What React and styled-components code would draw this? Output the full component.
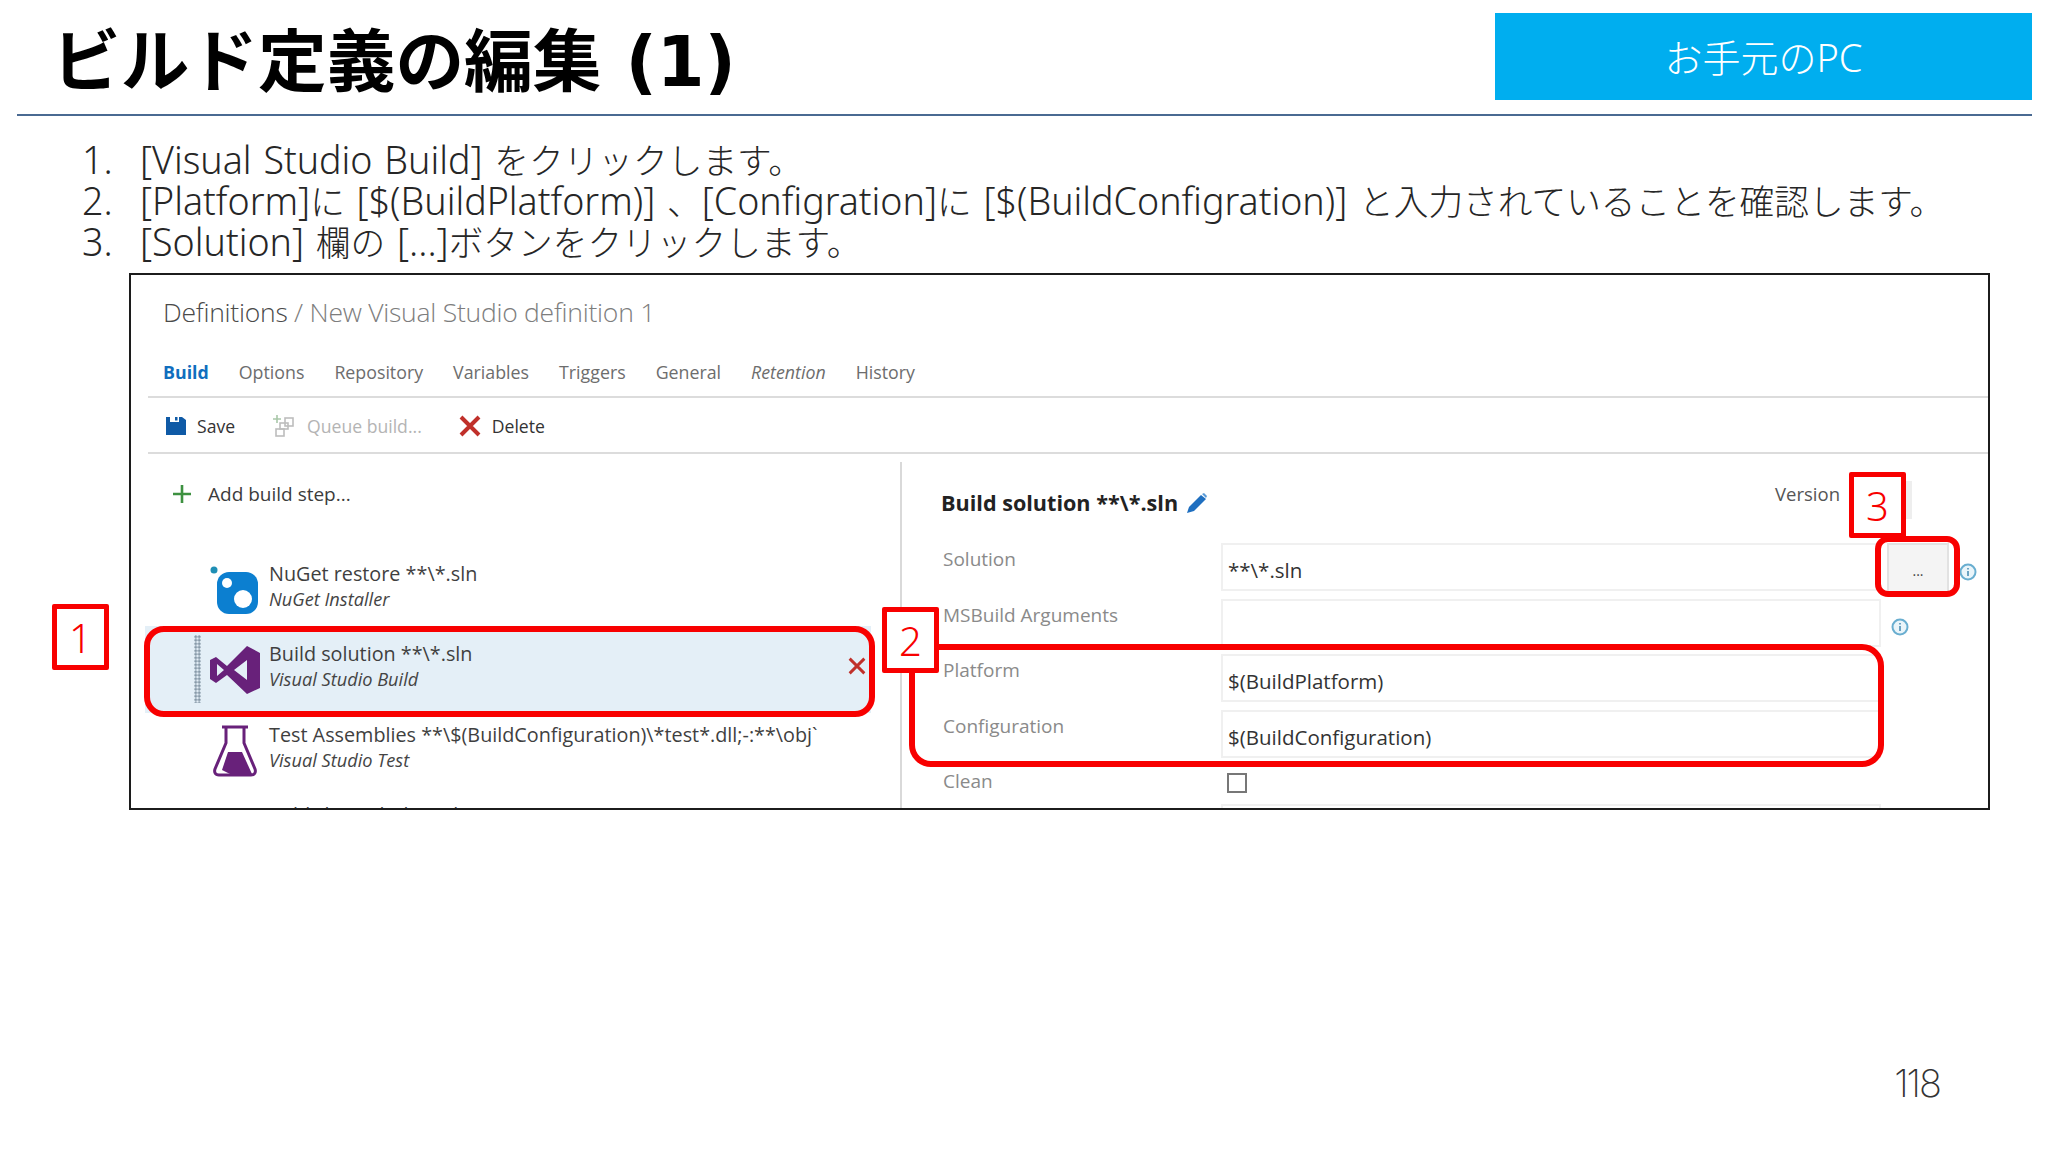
import styled, { createGlobalStyle } from 'styled-components';

const GlobalStyle = createGlobalStyle`
  html, body {
    margin: 0;
    background: #fff;
  }
  * {
    box-sizing: border-box;
  }
`;

const jpFont = `"Noto Sans", "Noto Sans CJK JP", sans-serif`;
const uiFont = `"Open Sans", "Noto Sans", sans-serif`;

const Page = styled.div`
  width: 2048px;
  height: 1152px;
  overflow: hidden;
  font-family: ${jpFont};
  background: #fff;
`;

const Header = styled.header`
  margin: 0 16px 0 17px;
  height: 116px;
  display: flex;
  justify-content: space-between;
  align-items: flex-start;
  border-bottom: 2px solid #4a6a92;
`;

const Title = styled.h1`
  margin: 24px 0 0 35px;
  font-size: 68.7px;
  line-height: 76px;
  font-weight: 700;
  color: #000;
  font-family: "DejaVu Sans", "Noto Sans CJK JP", sans-serif;
  white-space: nowrap;
`;

const DeviceBadge = styled.div`
  margin-top: 13px;
  width: 537px;
  height: 87px;
  padding-bottom: 2px;
  background: #00aeef;
  color: #fff;
  font-size: 38px;
  font-weight: 300;
  display: flex;
  align-items: center;
  justify-content: center;
`;

const Steps = styled.ol`
  margin: 23px 0 0 82px;
  padding: 0;
  list-style: none;
`;

const Step = styled.li`
  display: flex;
  height: 41px;
  align-items: center;
  font-size: 37.6px;
  font-weight: 300;
  word-spacing: 2px;
  color: #262626;
  white-space: nowrap;
`;

const StepNumber = styled.span`
  width: 58px;
`;

const Kana = styled.span`
  font-size: 34.7px;
`;

const Frame = styled.section`
  position: relative;
  margin: 11px 0 0 129px;
  width: 1861px;
  height: 537px;
  border: 2px solid #1c1c1c;
  overflow: hidden;
  font-family: ${uiFont};
  background: #fff;
`;

const Breadcrumb = styled.div`
  height: 74px;
  padding: 0 0 0 32px;
  display: flex;
  align-items: center;
  font-size: 26.5px;
  letter-spacing: -0.25px;
  font-weight: 300;
  color: #7d7d7d;
  span {
    color: #4a4a4a;
  }
`;

const Tabs = styled.nav`
  margin-left: 17px;
  height: 49px;
  padding: 0 0 2px 15px;
  display: flex;
  align-items: center;
  gap: 30px;
  border-bottom: 2px solid #dcdcdc;
  font-size: 17.8px;
  color: #6d6d6d;
`;

const Tab = styled.span`
  font-weight: ${p => (p.$active ? 700 : 400)};
  font-style: ${p => (p.$italic ? 'italic' : 'normal')};
  color: ${p => (p.$active ? '#106ebe' : 'inherit')};
`;

const Toolbar = styled.div`
  margin-left: 17px;
  height: 56px;
  padding: 2px 0 0 18px;
  display: flex;
  align-items: center;
  border-bottom: 2px solid #dcdcdc;
  font-size: 17.6px;
  color: #333;
`;

const ToolButton = styled.div`
  display: flex;
  align-items: center;
  gap: 11px;
  margin-right: 37px;
  color: ${p => (p.$disabled ? '#b4b4b4' : 'inherit')};
`;

const Body = styled.div`
  display: grid;
  grid-template-columns: 771px 1fr;
  height: 354px;
  padding-top: 8px;
`;

const LeftPane = styled.div`
  border-right: 2px solid #d9d9d9;
  overflow: hidden;
`;

const AddStep = styled.div`
  margin: 17px 0 37px 41px;
  height: 30px;
  display: flex;
  align-items: center;
  gap: 16px;
  font-size: 19px;
  color: #3c3c3c;
`;

const StepRow = styled.div`
  height: 80.3px;
  margin-left: 14px;
  width: 726px;
  padding-left: 51px;
  display: grid;
  grid-template-columns: 14px 50px 1fr;
  align-items: center;
  background: ${p => (p.$selected ? '#e4eff7' : 'transparent')};
  box-shadow: ${p => (p.$selected ? '0 6px 0 #e4eff7' : 'none')};
  position: relative;
`;

const DragHandle = styled.div`
  grid-column: 1;
  width: 7px;
  height: 68px;
  margin: 6px 0 0 -2px;
  background-image: radial-gradient(#8799a8 1.3px, transparent 1.5px);
  background-size: 3.5px 3.5px;
`;

const StepIcon = styled.div`
  grid-column: 2;
  height: 60px;
  padding-top: 8px;
  display: flex;
  align-items: center;
  justify-content: center;
`;

const StepText = styled.div`
  grid-column: 3;
  padding-left: 9px;
  white-space: nowrap;
`;

const StepName = styled.div`
  font-size: 19.8px;
  line-height: 27px;
  color: #3f3f3f;
`;

const StepKind = styled.div`
  font-size: 18.2px;
  line-height: 25px;
  font-style: italic;
  color: #444;
`;

const RemoveStep = styled.div`
  position: absolute;
  right: 5px;
  top: 31px;
  display: flex;
`;

const RightPane = styled.div`
  padding: 14px 0 0 39px;
  overflow: hidden;
  position: relative;
`;

const PaneHeader = styled.div`
  height: 67px;
  display: flex;
  align-items: flex-start;
  justify-content: space-between;
  padding-right: 76px;
`;

const PaneTitle = styled.h2`
  margin: 12px 0 0;
  font-size: 21.6px;
  line-height: 30px;
  font-weight: 700;
  color: #222;
  display: flex;
  align-items: center;
  gap: 8px;
`;

const VersionLabel = styled.div`
  margin-top: 5px;
  padding-right: 65px;
  font-size: 18.5px;
  line-height: 26px;
  color: #555;
  border-right: 7px solid #eeeeee;
  height: 38px;
`;

const Field = styled.div`
  display: grid;
  grid-template-columns: 280px 660px 68px 30px;
  height: ${p => p.$height || 55.6}px;
  align-items: start;
`;

const FieldLabel = styled.label`
  padding: 2px 0 0 2px;
  font-size: 19px;
  line-height: 28px;
  color: #8a8a8a;
`;

const FieldInput = styled.div`
  height: 48px;
  border: 2px solid #f0f0f0;
  padding: 11px 0 0 5px;
  font-size: 20.5px;
  line-height: 28px;
  color: #333;
`;

const CheckBox = styled.div`
  margin: 8px 0 0 6px;
  width: 20px;
  height: 20px;
  border: 2px solid #777;
`;

const BrowseButton = styled.div`
  margin-left: 6px;
  height: 48px;
  background: #f4f4f4;
  border: 2px solid #e2e2e2;
  border-bottom: none;
  display: flex;
  justify-content: center;
  padding-top: 16px;
  font-size: 14px;
  line-height: 20px;
  color: #444;
`;

const InfoSlot = styled.div`
  margin: ${p => p.$top}px 0 0 ${p => p.$left}px;
  display: flex;
`;

const Ring = styled.div`
  position: absolute;
  left: ${p => p.$x - 131}px;
  top: ${p => p.$y - 276}px;
  width: ${p => p.$w}px;
  height: ${p => p.$h}px;
  border: 6px solid #f80000;
  border-radius: ${p => p.$r}px;
  pointer-events: none;
`;

const Callout = styled.div`
  position: absolute;
  left: ${p => p.$x}px;
  top: ${p => p.$y}px;
  width: 57px;
  height: 66px;
  border: 5px solid #f80000;
  border-radius: 2px;
  background: #fff;
  color: #f80000;
  font-family: ${jpFont};
  font-size: 40px;
  font-weight: 300;
  display: flex;
  align-items: center;
  justify-content: center;
`;

const PageNumber = styled.div`
  margin: 250px 108px 0 0;
  text-align: right;
  font-family: Inter, sans-serif;
  font-size: 38px;
  line-height: 46px;
  font-weight: 200;
  letter-spacing: -2px;
  color: #333;
`;

const Layer = styled.div`
  position: relative;
`;

const SaveIcon = () => (
  <svg width="20" height="20" viewBox="0 0 20 20">
    <path d="M0 1h4v5h9V1h3l4 3v15H0z" fill="#0f5aa6" />
    <rect x="9" y="1" width="2.5" height="3.5" fill="#0f5aa6" />
  </svg>
);

const QueueIcon = () => (
  <svg width="24" height="24" viewBox="0 0 24 24" fill="none" stroke="#bdbdbd" strokeWidth="1.6">
    <rect x="13" y="4" width="8" height="8" />
    <rect x="8" y="9" width="8" height="6" />
    <rect x="4" y="15" width="8" height="7" />
    <path d="M5 1v8M1 5h8" stroke="#a9c7a9" />
  </svg>
);

const CrossIcon = ({ size = 22, width = 4 }) => (
  <svg width={size} height={size} viewBox="0 0 22 22">
    <path d="M2 2l18 18M20 2L2 20" stroke="#c0302a" strokeWidth={width} fill="none" />
  </svg>
);

const PlusIcon = () => (
  <svg width="20" height="20" viewBox="0 0 20 20">
    <path d="M10 1v18M1 10h18" stroke="#3d9140" strokeWidth="2.6" />
  </svg>
);

const NuGetIcon = () => (
  <svg width="50" height="50" viewBox="0 0 50 50">
    <circle cx="4" cy="5" r="3.5" fill="#1f8fb5" />
    <rect x="7" y="7" width="41" height="42" rx="12" fill="#0c7fd0" />
    <circle cx="17" cy="18" r="5" fill="#fff" />
    <circle cx="33" cy="34" r="9" fill="#fff" />
  </svg>
);

const VsIcon = () => (
  <svg width="50" height="50" viewBox="0 0 50 50">
    <path
      fillRule="evenodd"
      fill="#68217a"
      d="M37 1l13 7v35l-13 6L17 30l-11 8-6-4V15l6-3 11 9zM37 15L24 25l13 10zM7 19v12l7-6z"
    />
  </svg>
);

const FlaskIcon = () => (
  <svg width="44" height="52" viewBox="0 0 44 52">
    <path d="M9 2h26M13 3v15L2 44c-1 3 0 6 4 6h32c4 0 5-3 4-6L31 18V3" fill="none" stroke="#68217a" strokeWidth="3" />
    <path d="M15 27h14l10 22H17l-8-4z" fill="#68217a" />
  </svg>
);

const PencilIcon = () => (
  <svg width="22" height="22" viewBox="0 0 22 22">
    <path d="M1 21l2-6L15 3l5 4L8 19z" fill="#1f6fc0" />
    <path d="M16 2l2-1 3 3-1 2z" fill="#5a9bd8" />
  </svg>
);

const InfoIcon = () => (
  <svg width="18" height="18" viewBox="0 0 18 18">
    <circle cx="9" cy="9" r="7.5" fill="#eaf5fa" stroke="#69aed0" strokeWidth="2" />
    <path d="M9 8v5M9 5v1.6" stroke="#4d8fb5" strokeWidth="1.6" />
  </svg>
);

const App = () => (
  <Page>
    <GlobalStyle />
    <Header>
      <Title>ビルド定義の編集 (1)</Title>
      <DeviceBadge>お手元のPC</DeviceBadge>
    </Header>

    <Steps>
      <Step>
        <StepNumber>1.</StepNumber>
        <span>[Visual Studio Build] <Kana>をクリックします。</Kana></span>
      </Step>
      <Step>
        <StepNumber>2.</StepNumber>
        <span>[Platform]<Kana>に</Kana> [$(BuildPlatform)] <Kana>、</Kana>[Configration]<Kana>に</Kana> [$(BuildConfigration)] <Kana>と入力されていることを確認します。</Kana></span>
      </Step>
      <Step>
        <StepNumber>3.</StepNumber>
        <span>[Solution] <Kana>欄の</Kana> [...]<Kana>ボタンをクリックします。</Kana></span>
      </Step>
    </Steps>

    <Layer>
      <Frame>
        <Breadcrumb><span>Definitions</span>&nbsp;/ New Visual Studio definition 1</Breadcrumb>
        <Tabs>
          <Tab $active>Build</Tab>
          <Tab>Options</Tab>
          <Tab>Repository</Tab>
          <Tab>Variables</Tab>
          <Tab>Triggers</Tab>
          <Tab>General</Tab>
          <Tab $italic>Retention</Tab>
          <Tab>History</Tab>
        </Tabs>
        <Toolbar>
          <ToolButton><SaveIcon />Save</ToolButton>
          <ToolButton $disabled><QueueIcon />Queue build...</ToolButton>
          <ToolButton><CrossIcon />Delete</ToolButton>
        </Toolbar>
        <Body>
          <LeftPane>
            <AddStep><PlusIcon />Add build step...</AddStep>
            <StepRow>
              <StepIcon><NuGetIcon /></StepIcon>
              <StepText>
                <StepName>NuGet restore **\*.sln</StepName>
                <StepKind>NuGet Installer</StepKind>
              </StepText>
            </StepRow>
            <StepRow $selected>
              <DragHandle />
              <StepIcon><VsIcon /></StepIcon>
              <StepText>
                <StepName>Build solution **\*.sln</StepName>
                <StepKind>Visual Studio Build</StepKind>
              </StepText>
              <RemoveStep><CrossIcon size={18} width={3.5} /></RemoveStep>
            </StepRow>
            <StepRow>
              <StepIcon><FlaskIcon /></StepIcon>
              <StepText>
                <StepName>Test Assemblies **\$(BuildConfiguration)\*test*.dll;-:**\obj`</StepName>
                <StepKind>Visual Studio Test</StepKind>
              </StepText>
            </StepRow>
            <StepRow>
              <StepText>
                <StepName>Publish symbols path</StepName>
                <StepKind>Index Sources &amp; Publish Symbols</StepKind>
              </StepText>
            </StepRow>
          </LeftPane>
          <RightPane>
            <PaneHeader>
              <PaneTitle>Build solution **\*.sln <PencilIcon /></PaneTitle>
              <VersionLabel>Version</VersionLabel>
            </PaneHeader>
            <Field>
              <FieldLabel>Solution</FieldLabel>
              <FieldInput>**\*.sln</FieldInput>
              <BrowseButton>...</BrowseButton>
              <InfoSlot $top={20} $left={10}><InfoIcon /></InfoSlot>
            </Field>
            <Field>
              <FieldLabel>MSBuild Arguments</FieldLabel>
              <FieldInput />
              <InfoSlot $top={19} $left={10}><InfoIcon /></InfoSlot>
            </Field>
            <Field>
              <FieldLabel>Platform</FieldLabel>
              <FieldInput>$(BuildPlatform)</FieldInput>
            </Field>
            <Field>
              <FieldLabel>Configuration</FieldLabel>
              <FieldInput>$(BuildConfiguration)</FieldInput>
            </Field>
            <Field $height={39}>
              <FieldLabel>Clean</FieldLabel>
              <CheckBox />
            </Field>
            <Field>
              <span />
              <FieldInput />
            </Field>
          </RightPane>
        </Body>
        <Ring $x={144} $y={627} $w={731} $h={91} $r={20} />
        <Ring $x={909} $y={645} $w={975} $h={123} $r={22} />
        <Ring $x={1875} $y={537} $w={85} $h={61} $r={13} />
      </Frame>
      <Callout $x={52} $y={331}>1</Callout>
      <Callout $x={882} $y={334}>2</Callout>
      <Callout $x={1849} $y={199}>3</Callout>
    </Layer>

    <PageNumber>118</PageNumber>
  </Page>
);

export default App;
